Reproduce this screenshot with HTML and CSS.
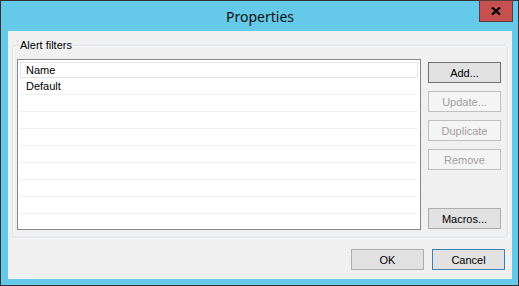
FILE: index.html
```html
<!DOCTYPE html>
<html lang="en">
<head>
    <meta charset="UTF-8">
    <meta name="viewport" content="width=device-width, initial-scale=1.0">
    <title>Properties</title>
    <link rel="stylesheet" href="styles.css">
</head>
<body>
    <div class="window">
        <div class="titlebar">
            <span class="title">Properties</span>
            <button class="close" title="Close">
                <svg width="10" height="8" viewBox="0 0 10 8">
                    <path d="M1 0.5 L9 7.5 M9 0.5 L1 7.5" stroke="#000" stroke-width="2.2" fill="none"/>
                </svg>
            </button>
        </div>

        <div class="client">
            <fieldset class="group">
                <legend>Alert filters</legend>
                <div class="list">
                    <div class="list-header">Name</div>
                    <div class="row">Default</div>
                    <div class="row"></div>
                    <div class="row"></div>
                    <div class="row"></div>
                    <div class="row"></div>
                    <div class="row"></div>
                    <div class="row"></div>
                    <div class="row"></div>
                    <div class="row"></div>
                </div>
                <div class="side-buttons">
                    <button class="btn focused">Add...</button>
                    <button class="btn" disabled>Update...</button>
                    <button class="btn" disabled>Duplicate</button>
                    <button class="btn" disabled>Remove</button>
                    <button class="btn macros">Macros...</button>
                </div>
            </fieldset>

            <div class="footer">
                <button class="btn">OK</button>
                <button class="btn default">Cancel</button>
            </div>
        </div>
    </div>
</body>
</html>
```

FILE: styles.css
```css
* {
    box-sizing: border-box;
}
body {
    margin: 0;
    padding: 0;
    font-family: "Liberation Sans", Arial, sans-serif;
    font-size: 11px;
    color: #000;
}
.window {
    position: relative;
    width: 519px;
    height: 286px;
    border: 1px solid #333;
    background-color: #65c9ea;
    padding: 0 6px 6px 7px;
    display: flex;
    flex-direction: column;
}
.titlebar {
    height: 30px;
    display: flex;
    justify-content: center;
    align-items: center;
}
.title {
    font-family: "Noto Sans", "Open Sans", sans-serif;
    font-size: 14px;
    color: #111;
    padding-top: 1px;
}
.close {
    position: absolute;
    top: -1px;
    right: 5px;
    width: 34px;
    height: 22px;
    margin: 0;
    padding: 0;
    border: 1px solid #5a3d3d;
    background-color: #c75050;
    display: flex;
    justify-content: center;
    align-items: center;
}
.client {
    flex: 1;
    background-color: #f0f0f0;
    display: flex;
    flex-direction: column;
}
.group {
    margin: 8px 4px 0 4px;
    padding: 7px 6px 7px 4px;
    border: 1px solid #d5dfe5;
    border-radius: 3px;
    box-shadow: inset 1px 1px 0 #fff, 1px 1px 0 #fff;
    display: flex;
    gap: 7px;
}
.group legend {
    margin-left: 2px;
    padding: 0 1px;
    line-height: 13px;
}
.list {
    width: 404px;
    height: 171px;
    border: 1px solid #828790;
    background-color: #fff;
    padding: 1px;
    overflow: hidden;
}
.list-header {
    height: 16px;
    margin: 1px 1px 0 1px;
    border: 1px solid #e5e5e5;
    padding: 1px 0 0 5px;
    line-height: 13px;
}
.row {
    height: 17px;
    margin: 0 1px;
    border-bottom: 1px solid #f0f0f0;
    padding: 2px 0 0 6px;
    line-height: 13px;
}
.side-buttons {
    display: flex;
    flex-direction: column;
    gap: 8px;
    padding-top: 3px;
    padding-bottom: 1px;
}
.btn {
    width: 73px;
    height: 21px;
    margin: 0;
    padding: 0;
    font-family: "Liberation Sans", Arial, sans-serif;
    font-size: 11px;
    color: #000;
    background-color: #e1e1e1;
    border: 1px solid #adadad;
}
.btn.focused {
    border-color: #707070;
}
.btn:disabled {
    color: #a0a0a0;
    background-color: #f4f4f4;
    border-color: #bfbfbf;
}
.btn.macros {
    margin-top: auto;
}
.btn.default {
    border-color: #3c7fb1;
}
.footer {
    display: flex;
    justify-content: flex-end;
    gap: 8px;
    margin-top: 11px;
    padding-right: 7px;
}
```
